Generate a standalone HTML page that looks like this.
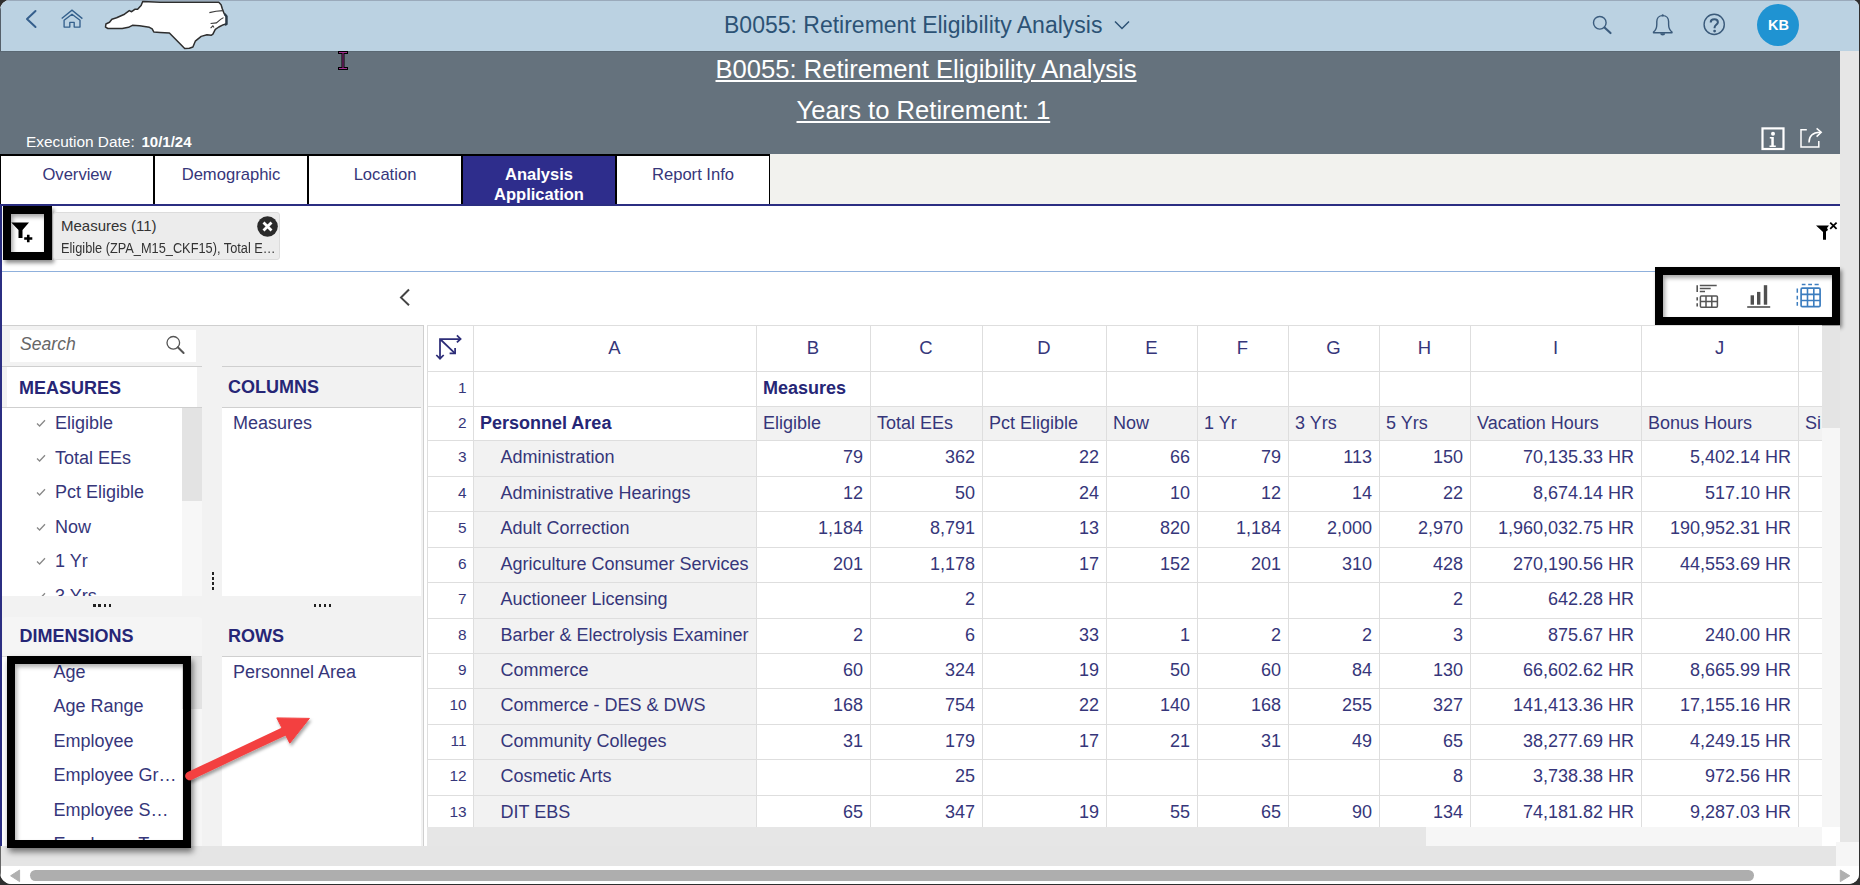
<!DOCTYPE html><html><head><meta charset="utf-8"><style>
*{box-sizing:border-box;margin:0;padding:0}
html,body{width:1860px;height:885px;overflow:hidden;background:#2f2f2f}
body{font-family:"Liberation Sans",sans-serif;position:relative}
.a{position:absolute}
.t{position:absolute;white-space:nowrap;line-height:1}
</style></head><body><div class="a" id="win" style="left:0;top:0;width:1859px;height:884px;background:#fff;border-radius:10px 7px 10px 12px;overflow:hidden">
<div class="a" style="left:0;top:0;width:1859px;height:51px;background:#bbd2e2;border-top:1px solid #9aaabb"></div>
<svg class="a" style="left:20px;top:5px" width="24" height="28" viewBox="0 0 24 28"><path d="M15.5 6 L7 14 L15.5 22" fill="none" stroke="#355f8c" stroke-width="2" stroke-linecap="round" stroke-linejoin="round"/></svg>
<svg class="a" style="left:58px;top:5px" width="28" height="28" viewBox="0 0 28 28"><path d="M3.7 13.6 L14 5.2 L24.4 13.6" fill="none" stroke="#34608c" stroke-width="1.35"/><path d="M6.1 22.1 V15.3 L14 9.2 L22 15.3 V22.1 H16.2 V17.4 H11.8 V22.1 Z" fill="none" stroke="#34608c" stroke-width="1.35" stroke-linejoin="round"/></svg>
<svg class="a" style="left:100px;top:0" width="132" height="52" viewBox="100 0 132 52"><path d="M142.7 1.4 L160 2.35 L218.8 2.35 L221.1 4.7 L222.3 8.8 L224.1 13.5 L226.2 16 L226.2 24.1 L223.5 24.7 L218.8 27 L215.3 29.4 L212.9 34.1 L211.1 35.3 L207 34.7 L201.2 36.4 L195.3 41.2 L192.9 47 L189.4 48.2 L184.7 48.6 L169.4 32.9 L160 32.4 L153.8 32 L152.2 28.9 L149.4 27.3 L139.6 25.7 L132.4 25.3 L128.5 27.3 L122.2 28.5 L107.9 28.5 L105.5 27.2 L105.9 24 L109.5 22.3 L111.9 19.2 L116.6 17.8 L124.5 14.2 L129.3 10.6 L131.6 11.7 L134.8 9.3 L137.6 9.3 L141.1 5.5 Z" fill="#fff" stroke="#2e2e2e" stroke-width="1.5" stroke-linejoin="round"/><path d="M209.4 12.6 L216 11.2 L222.9 10.6 M210.6 23.5 L216.4 22.9 L220.6 19.4 L223.5 17.6 M210.6 28.2 L212.9 25.9 L214 27.5" fill="none" stroke="#3a3a3a" stroke-width="1.1"/><path d="M224.6 14 L226.6 16.5 L226.6 24 L225 25" fill="none" stroke="#2a3a48" stroke-width="2.2"/></svg>
<div class="t" style="left:724px;top:14px;font-size:23px;color:#2c5275">B0055: Retirement Eligibility Analysis</div>
<svg class="a" style="left:1112px;top:17px" width="20" height="16" viewBox="0 0 20 16"><path d="M3 4.5 L10 11.5 L17 4.5" fill="none" stroke="#2c5275" stroke-width="1.5"/></svg>
<svg class="a" style="left:1588px;top:11px" width="28" height="28" viewBox="0 0 28 28"><circle cx="11.8" cy="11.8" r="6.3" fill="none" stroke="#3b5c7e" stroke-width="1.4"/><path d="M16.5 16.5 L22.5 22" stroke="#3b5c7e" stroke-width="2.2" stroke-linecap="round"/></svg>
<svg class="a" style="left:1645px;top:8px" width="40" height="34" viewBox="1645 8 40 34"><path d="M1662.7 15.6 C1666.7 15.6 1668.6 18.6 1668.6 21.6 V24.2 C1668.6 27.6 1669.6 30.2 1672 32 V32.7 H1653.5 V32 C1655.9 30.2 1656.8 27.6 1656.8 24.2 V21.6 C1656.8 18.6 1658.7 15.6 1662.7 15.6 Z" fill="none" stroke="#3a5a7a" stroke-width="1.4" stroke-linejoin="round"/><path d="M1660.2 33.2 A2.5 2.3 0 0 0 1665.2 33.2 Z" fill="#3a5a7a"/><circle cx="1662.7" cy="15.4" r="1.1" fill="#3a5a7a"/></svg>
<svg class="a" style="left:1698px;top:8px" width="34" height="34" viewBox="1698 8 34 34"><circle cx="1714.2" cy="24.4" r="10.1" fill="none" stroke="#3a5a7a" stroke-width="1.4"/><path d="M1710.7 22.4 C1710.7 20.3 1712.3 19.2 1714.3 19.2 C1716.4 19.2 1717.9 20.5 1717.9 22.2 C1717.9 24.6 1714.6 25 1714.6 27.3 V28.3" fill="none" stroke="#3a5a7a" stroke-width="2"/><circle cx="1714.6" cy="31.1" r="1.4" fill="#3a5a7a"/></svg>
<div class="a" style="left:1757px;top:4px;width:42px;height:42px;border-radius:50%;background:#1f93d2"></div>
<div class="t" style="left:1768px;top:18px;font-size:14.5px;font-weight:700;color:#fff">KB</div>
<div class="a" style="left:0;top:51px;width:1840px;height:103px;background:#65727d;border-top:1px solid #5a6873"></div>
<div class="a" style="left:1840px;top:51px;width:19px;height:795px;background:#e6e6e6"></div>
<div class="t" style="left:715.5px;top:57px;font-size:25.6px;color:#fff;text-decoration:underline;text-decoration-thickness:1.5px;text-underline-offset:2px">B0055: Retirement Eligibility Analysis</div>
<div class="t" style="left:796.5px;top:98px;font-size:25.6px;color:#fff;text-decoration:underline;text-decoration-thickness:1.5px;text-underline-offset:2px">Years to Retirement: 1</div>
<div class="t" style="left:26px;top:133.5px;font-size:15.4px;color:#fff">Execution Date:</div>
<div class="t" style="left:141.5px;top:133.5px;font-size:15px;font-weight:700;color:#fff">10/1/24</div>
<svg class="a" style="left:336px;top:50px" width="14" height="22" viewBox="0 0 14 22"><path d="M2 2.5 H12 M7 2.5 V18.5 M2 18.5 H12" fill="none" stroke="#000" stroke-width="3"/><path d="M3 2.5 H11 M7 3 V18 M3 18.5 H11" fill="none" stroke="#a03090" stroke-width="1"/></svg>
<svg class="a" style="left:1758px;top:124px" width="30" height="30" viewBox="0 0 30 30"><rect x="4.5" y="4.4" width="21" height="20.6" fill="none" stroke="#fff" stroke-width="2.2"/><circle cx="15" cy="9.8" r="2" fill="#fff"/><path d="M11.8 13 H15.8 V21.5 H17.8 V23 H11.5 V21.5 H13.3 V14.5 H11.8 Z" fill="#fff"/></svg>
<svg class="a" style="left:1796px;top:124px" width="30" height="30" viewBox="0 0 30 30"><path d="M10.8 5.8 H5 V23 H22.8 V17" fill="none" stroke="#fff" stroke-width="1.5"/><path d="M13 18.5 C13 12 17 8.5 24 8.3" fill="none" stroke="#fff" stroke-width="1.5"/><path d="M20.6 4.4 L25.2 8.3 L20.6 12.6" fill="none" stroke="#fff" stroke-width="1.5"/></svg>
<div class="a" style="left:0;top:154px;width:1840px;height:52px;background:#f2f2ee"></div>
<div class="a" style="left:0;top:154px;width:770px;height:51px;background:#000"></div>
<div class="a" style="left:1px;top:155.5px;width:152px;height:49.5px;background:#fff"></div>
<div class="t" style="left:1px;top:167px;width:152px;text-align:center;font-size:16.6px;color:#36367a">Overview</div>
<div class="a" style="left:155px;top:155.5px;width:152px;height:49.5px;background:#fff"></div>
<div class="t" style="left:155px;top:167px;width:152px;text-align:center;font-size:16.6px;color:#36367a">Demographic</div>
<div class="a" style="left:309px;top:155.5px;width:152px;height:49.5px;background:#fff"></div>
<div class="t" style="left:309px;top:167px;width:152px;text-align:center;font-size:16.6px;color:#36367a">Location</div>
<div class="a" style="left:463px;top:155.5px;width:152px;height:49.5px;background:#2e2d8c"></div>
<div class="t" style="left:463px;top:164px;width:152px;text-align:center;font-size:16.5px;line-height:20px;font-weight:700;color:#fff">Analysis<br>Application</div>
<div class="a" style="left:617px;top:155.5px;width:152px;height:49.5px;background:#fff"></div>
<div class="t" style="left:617px;top:167px;width:152px;text-align:center;font-size:16.6px;color:#36367a">Report Info</div>
<div class="a" style="left:0;top:204px;width:1840px;height:2px;background:#2b2e82"></div>
<div class="a" style="left:0;top:206px;width:2px;height:640px;background:#2b2e82"></div>
<div class="a" style="left:2px;top:271px;width:1838px;height:1px;background:#8fb0dc"></div>
<div class="a" style="left:2.5px;top:205.5px;width:49.5px;height:54px;background:#fff;border:8.5px solid #000;box-shadow:2px 3px 4px rgba(0,0,0,.45), inset 2px 3px 4px rgba(0,0,0,.35)"></div>
<svg class="a" style="left:10px;top:218px" width="26" height="28" viewBox="0 0 26 28"><path d="M1.3 4.6 H19 L12.5 12 V19.9 H8.5 V12 Z" fill="#000"/><path d="M14.2 20.5 H22.3 M18.25 16.7 V24.3" stroke="#000" stroke-width="2.6"/></svg>
<div class="a" style="left:53px;top:212px;width:226.5px;height:47.5px;background:#ececec;border:1px solid #dcdcdc;border-radius:3px"></div>
<div class="t" style="left:61px;top:217.5px;font-size:15px;color:#333">Measures (11)</div>
<div class="t" style="left:61px;top:240.5px;font-size:14px;color:#333;transform:scaleX(.912);transform-origin:0 0">Eligible (ZPA_M15_CKF15), Total E…</div>
<svg class="a" style="left:256px;top:215px" width="23" height="23" viewBox="0 0 23 23"><circle cx="11.5" cy="11.5" r="10.3" fill="#2a2a2a"/><path d="M7.5 7.5 L15.5 15.5 M15.5 7.5 L7.5 15.5" stroke="#fff" stroke-width="2.8"/></svg>
<svg class="a" style="left:1814px;top:220px" width="26" height="22" viewBox="0 0 26 22"><path d="M2 5.5 H15 L13 8 L14 10 L12 11.5 V19.8 H9 V12 Z" fill="#000"/><path d="M16.2 2.6 L22.6 8.8 M22.6 2.6 L16.2 8.8" stroke="#000" stroke-width="1.8"/></svg>
<svg class="a" style="left:395px;top:285px" width="20" height="24" viewBox="0 0 20 24"><path d="M14 4.5 L6 12.6 L14 20.3" fill="none" stroke="#444" stroke-width="2"/></svg>
<div class="a" style="left:1655px;top:267px;width:185px;height:58px;background:#fff;border:8.3px solid #000;box-shadow:2px 3px 4px rgba(0,0,0,.45), inset 2px 3px 4px rgba(0,0,0,.35)"></div>
<svg class="a" style="left:1690px;top:280px" width="34" height="32" viewBox="1690 280 34 32"><path d="M1697.2 285.2 V292 M1697.2 297.2 V300.6 M1697.2 303.2 V306.6" stroke="#555" stroke-width="1.6"/><path d="M1699.8 285.5 H1716.7 M1699.8 288.5 H1710.7 M1699.8 291.5 H1705" stroke="#555" stroke-width="1.4"/><rect x="1700.4" y="296" width="17" height="11.2" rx="1" fill="none" stroke="#555" stroke-width="1.5"/><path d="M1706 296 V307 M1711.8 296 V307 M1700.4 301.6 H1717.4" stroke="#555" stroke-width="1.5"/></svg>
<svg class="a" style="left:1744px;top:280px" width="30" height="32" viewBox="1744 280 30 32"><rect x="1750.6" y="295.3" width="3.4" height="9.4" fill="#505050"/><rect x="1757" y="291.9" width="3.4" height="12.8" fill="#505050"/><rect x="1763.8" y="285.2" width="3.4" height="19.5" fill="#505050"/><rect x="1747.2" y="306.2" width="23" height="1.6" fill="#505050"/></svg>
<svg class="a" style="left:1794px;top:280px" width="30" height="32" viewBox="1794 280 30 32"><path d="M1801.8 284.4 H1805.5 M1808.2 284.4 H1812 M1814.6 284.4 H1818.7" stroke="#3c7dbf" stroke-width="1.5"/><path d="M1797.3 288.5 V292.7 M1797.3 295.7 V299.5 M1797.3 302.1 V305.8" stroke="#3c7dbf" stroke-width="1.5"/><rect x="1801.1" y="288.2" width="19" height="18.5" rx="1.2" fill="none" stroke="#3c7dbf" stroke-width="1.7"/><path d="M1807.5 288.2 V306.7 M1813.8 288.2 V306.7 M1801.1 294.4 H1820.1 M1801.1 300.5 H1820.1" stroke="#3c7dbf" stroke-width="1.6"/></svg>
<div class="a" style="left:2px;top:325px;width:422px;height:521px;background:#f2f2f2;border-top:1px solid #cfcfcf"></div>
<div class="a" style="left:422.5px;top:325px;width:1.5px;height:521px;background:#cfcfcf"></div>
<div class="a" style="left:10px;top:330px;width:186px;height:32px;background:#fff"></div>
<div class="t" style="left:20px;top:336px;font-size:17.6px;font-style:italic;color:#666">Search</div>
<svg class="a" style="left:162px;top:332px" width="26" height="26" viewBox="0 0 26 26"><circle cx="11.3" cy="10.8" r="6.3" fill="none" stroke="#555" stroke-width="1.3"/><path d="M15.8 15.3 L21.6 21" stroke="#555" stroke-width="2" stroke-linecap="round"/></svg>
<div class="a" style="left:2px;top:366px;width:200px;height:1px;background:#cfcfcf"></div>
<div class="a" style="left:7px;top:367px;width:190px;height:40px;background:#fff"></div>
<div class="t" style="left:19px;top:379px;font-size:18px;font-weight:700;color:#262676">MEASURES</div>
<div class="a" style="left:2px;top:407px;width:200px;height:1px;background:#cfcfcf"></div>
<div class="a" style="left:2px;top:408px;width:180px;height:188px;background:#fff"></div>
<div class="a" style="left:182px;top:408px;width:19.5px;height:93px;background:#e3e3e3"></div>
<div class="a" style="left:182px;top:501px;width:19.5px;height:95px;background:#f7f7f7"></div>
<div class="t" style="left:55px;top:414.3px;font-size:18px;color:#36367a">Eligible</div>
<svg class="a" style="left:35px;top:418.3px" width="12" height="10" viewBox="0 0 12 10"><path d="M2 5.5 L4.6 8 L10 2.2" fill="none" stroke="#888" stroke-width="1.3"/></svg>
<div class="t" style="left:55px;top:448.8px;font-size:18px;color:#36367a">Total EEs</div>
<svg class="a" style="left:35px;top:452.8px" width="12" height="10" viewBox="0 0 12 10"><path d="M2 5.5 L4.6 8 L10 2.2" fill="none" stroke="#888" stroke-width="1.3"/></svg>
<div class="t" style="left:55px;top:483.3px;font-size:18px;color:#36367a">Pct Eligible</div>
<svg class="a" style="left:35px;top:487.3px" width="12" height="10" viewBox="0 0 12 10"><path d="M2 5.5 L4.6 8 L10 2.2" fill="none" stroke="#888" stroke-width="1.3"/></svg>
<div class="t" style="left:55px;top:517.8px;font-size:18px;color:#36367a">Now</div>
<svg class="a" style="left:35px;top:521.8px" width="12" height="10" viewBox="0 0 12 10"><path d="M2 5.5 L4.6 8 L10 2.2" fill="none" stroke="#888" stroke-width="1.3"/></svg>
<div class="t" style="left:55px;top:552.3px;font-size:18px;color:#36367a">1 Yr</div>
<svg class="a" style="left:35px;top:556.3px" width="12" height="10" viewBox="0 0 12 10"><path d="M2 5.5 L4.6 8 L10 2.2" fill="none" stroke="#888" stroke-width="1.3"/></svg>
<div class="t" style="left:55px;top:586.8px;font-size:18px;color:#36367a">3 Yrs</div>
<svg class="a" style="left:35px;top:590.8px" width="12" height="10" viewBox="0 0 12 10"><path d="M2 5.5 L4.6 8 L10 2.2" fill="none" stroke="#888" stroke-width="1.3"/></svg>
<div class="a" style="left:2px;top:596px;width:200px;height:20px;background:#f2f2f2"></div>
<div class="a" style="left:93.3px;top:604.2px;width:2.6px;height:2.8px;background:#222"></div><div class="a" style="left:98.4px;top:604.2px;width:2.6px;height:2.8px;background:#222"></div><div class="a" style="left:103.5px;top:604.2px;width:2.6px;height:2.8px;background:#222"></div><div class="a" style="left:108.6px;top:604.2px;width:2.6px;height:2.8px;background:#222"></div>
<div class="a" style="left:313.5px;top:604.2px;width:2.6px;height:2.8px;background:#222"></div><div class="a" style="left:318.6px;top:604.2px;width:2.6px;height:2.8px;background:#222"></div><div class="a" style="left:323.7px;top:604.2px;width:2.6px;height:2.8px;background:#222"></div><div class="a" style="left:328.8px;top:604.2px;width:2.6px;height:2.8px;background:#222"></div>
<div class="a" style="left:211.5px;top:572.0px;width:2.6px;height:2.6px;background:#222"></div>
<div class="a" style="left:211.5px;top:577.0px;width:2.6px;height:2.6px;background:#222"></div>
<div class="a" style="left:211.5px;top:582.0px;width:2.6px;height:2.6px;background:#222"></div>
<div class="a" style="left:211.5px;top:587.0px;width:2.6px;height:2.6px;background:#222"></div>
<div class="a" style="left:3px;top:616.5px;width:199px;height:40px;background:#f5f5f5;border-radius:3px 3px 0 0"></div>
<div class="t" style="left:19.5px;top:627px;font-size:18px;font-weight:700;color:#262676">DIMENSIONS</div>
<div class="a" style="left:2px;top:656px;width:200px;height:1px;background:#dcdcdc"></div>
<div class="a" style="left:2px;top:657px;width:180px;height:189px;background:#fff"></div>
<div class="a" style="left:182px;top:657px;width:19.5px;height:52px;background:#e3e3e3"></div>
<div class="a" style="left:182px;top:709px;width:19.5px;height:137px;background:#f7f7f7"></div>
<div class="t" style="left:53.5px;top:662.6px;font-size:18px;color:#36367a">Age</div>
<div class="t" style="left:53.5px;top:697.1px;font-size:18px;color:#36367a">Age Range</div>
<div class="t" style="left:53.5px;top:731.6px;font-size:18px;color:#36367a">Employee</div>
<div class="t" style="left:53.5px;top:766.1px;font-size:18px;color:#36367a">Employee Gr…</div>
<div class="t" style="left:53.5px;top:800.6px;font-size:18px;color:#36367a">Employee S…</div>
<div class="t" style="left:53.5px;top:835.1px;font-size:18px;color:#36367a">Employee Ty</div>
<div class="a" style="left:222px;top:366px;width:199px;height:1px;background:#cfcfcf"></div>
<div class="a" style="left:222px;top:367.5px;width:199px;height:40px;background:#f2f2f2"></div>
<div class="t" style="left:228px;top:378px;font-size:18px;font-weight:700;color:#262676">COLUMNS</div>
<div class="a" style="left:222px;top:407px;width:199px;height:1px;background:#cfcfcf"></div>
<div class="a" style="left:222px;top:408px;width:199px;height:188px;background:#fff"></div>
<div class="t" style="left:233px;top:413.7px;font-size:18px;color:#36367a">Measures</div>
<div class="a" style="left:222px;top:616.5px;width:199px;height:40px;background:#f2f2f2"></div>
<div class="t" style="left:228px;top:627px;font-size:18px;font-weight:700;color:#262676">ROWS</div>
<div class="a" style="left:222px;top:656px;width:199px;height:1px;background:#cfcfcf"></div>
<div class="a" style="left:222px;top:657px;width:199px;height:189px;background:#fff"></div>
<div class="t" style="left:233px;top:663px;font-size:18px;color:#36367a">Personnel Area</div>
<div class="a" style="left:427px;top:325px;width:1395px;height:502px;background:#fff;overflow:hidden" id="tbl">
<div class="a" style="left:329.0px;top:81.0px;width:1144.0px;height:34px;background:#f2f2f2"></div>
<div class="a" style="left:46.0px;top:115.0px;width:283.0px;height:400px;background:#f2f2f2"></div>
<div class="a" style="left:0px;top:0;width:1px;height:510px;background:#dedede"></div>
<div class="a" style="left:46px;top:0;width:1px;height:510px;background:#dedede"></div>
<div class="a" style="left:329px;top:0;width:1px;height:510px;background:#dedede"></div>
<div class="a" style="left:443px;top:0;width:1px;height:510px;background:#dedede"></div>
<div class="a" style="left:555px;top:0;width:1px;height:510px;background:#dedede"></div>
<div class="a" style="left:679px;top:0;width:1px;height:510px;background:#dedede"></div>
<div class="a" style="left:770px;top:0;width:1px;height:510px;background:#dedede"></div>
<div class="a" style="left:861px;top:0;width:1px;height:510px;background:#dedede"></div>
<div class="a" style="left:952px;top:0;width:1px;height:510px;background:#dedede"></div>
<div class="a" style="left:1043px;top:0;width:1px;height:510px;background:#dedede"></div>
<div class="a" style="left:1214px;top:0;width:1px;height:510px;background:#dedede"></div>
<div class="a" style="left:1371px;top:0;width:1px;height:510px;background:#dedede"></div>
<div class="a" style="left:0;top:0;width:1400px;height:1px;background:#dedede"></div>
<div class="a" style="left:0;top:46px;width:1400px;height:1px;background:#dedede"></div>
<div class="a" style="left:0;top:81px;width:1400px;height:1px;background:#dedede"></div>
<div class="a" style="left:0;top:115px;width:1400px;height:1px;background:#dedede"></div>
<div class="a" style="left:0;top:151px;width:1400px;height:1px;background:#dedede"></div>
<div class="a" style="left:0;top:186px;width:1400px;height:1px;background:#dedede"></div>
<div class="a" style="left:0;top:222px;width:1400px;height:1px;background:#dedede"></div>
<div class="a" style="left:0;top:257px;width:1400px;height:1px;background:#dedede"></div>
<div class="a" style="left:0;top:293px;width:1400px;height:1px;background:#dedede"></div>
<div class="a" style="left:0;top:328px;width:1400px;height:1px;background:#dedede"></div>
<div class="a" style="left:0;top:363px;width:1400px;height:1px;background:#dedede"></div>
<div class="a" style="left:0;top:399px;width:1400px;height:1px;background:#dedede"></div>
<div class="a" style="left:0;top:434px;width:1400px;height:1px;background:#dedede"></div>
<div class="a" style="left:0;top:470px;width:1400px;height:1px;background:#dedede"></div>
<div class="a" style="left:0;top:505px;width:1400px;height:1px;background:#dedede"></div>
<div class="t" style="left:46.0px;width:283.0px;top:14.0px;text-align:center;font-size:18.5px;color:#36367a">A</div>
<div class="t" style="left:329.0px;width:114.0px;top:14.0px;text-align:center;font-size:18.5px;color:#36367a">B</div>
<div class="t" style="left:443.0px;width:112.0px;top:14.0px;text-align:center;font-size:18.5px;color:#36367a">C</div>
<div class="t" style="left:555.0px;width:124.0px;top:14.0px;text-align:center;font-size:18.5px;color:#36367a">D</div>
<div class="t" style="left:679.0px;width:91.0px;top:14.0px;text-align:center;font-size:18.5px;color:#36367a">E</div>
<div class="t" style="left:770.0px;width:91.0px;top:14.0px;text-align:center;font-size:18.5px;color:#36367a">F</div>
<div class="t" style="left:861.0px;width:91.0px;top:14.0px;text-align:center;font-size:18.5px;color:#36367a">G</div>
<div class="t" style="left:952.0px;width:91.0px;top:14.0px;text-align:center;font-size:18.5px;color:#36367a">H</div>
<div class="t" style="left:1043.0px;width:171.0px;top:14.0px;text-align:center;font-size:18.5px;color:#36367a">I</div>
<div class="t" style="left:1214.0px;width:157.0px;top:14.0px;text-align:center;font-size:18.5px;color:#36367a">J</div>
<svg class="a" style="left:5.0px;top:7.0px" width="34" height="32" viewBox="432 332 34 32"><path d="M440 358.5 V339 H460.5 M440 339 L455 353.3" fill="none" stroke="#2d2d78" stroke-width="1.75"/><path d="M456.9 335.4 L460.6 338.9 L456.9 342.4 M436.3 355 L440 358.7 L443.7 355 M455.1 348 V353.3 H449.6" fill="none" stroke="#2d2d78" stroke-width="1.75" stroke-linejoin="miter"/></svg>
<div class="t" style="left:0.0px;width:39.5px;top:55.0px;text-align:right;font-size:15.4px;color:#36367a">1</div>
<div class="t" style="left:336.0px;top:54.0px;font-size:18px;font-weight:700;color:#262676">Measures</div>
<div class="t" style="left:0.0px;width:39.5px;top:90.0px;text-align:right;font-size:15.4px;color:#36367a">2</div>
<div class="t" style="left:53.0px;top:89.0px;font-size:18px;font-weight:700;color:#262676">Personnel Area</div>
<div class="t" style="left:336.0px;top:89.0px;font-size:18px;color:#36367a">Eligible</div>
<div class="t" style="left:450.0px;top:89.0px;font-size:18px;color:#36367a">Total EEs</div>
<div class="t" style="left:562.0px;top:89.0px;font-size:18px;color:#36367a">Pct Eligible</div>
<div class="t" style="left:686.0px;top:89.0px;font-size:18px;color:#36367a">Now</div>
<div class="t" style="left:777.0px;top:89.0px;font-size:18px;color:#36367a">1 Yr</div>
<div class="t" style="left:868.0px;top:89.0px;font-size:18px;color:#36367a">3 Yrs</div>
<div class="t" style="left:959.0px;top:89.0px;font-size:18px;color:#36367a">5 Yrs</div>
<div class="t" style="left:1050.0px;top:89.0px;font-size:18px;color:#36367a">Vacation Hours</div>
<div class="t" style="left:1221.0px;top:89.0px;font-size:18px;color:#36367a">Bonus Hours</div>
<div class="t" style="left:1378.0px;top:89.0px;font-size:18px;color:#36367a">Si</div>
<div class="t" style="left:0.0px;width:39.5px;top:124.0px;text-align:right;font-size:15.4px;color:#36367a">3</div>
<div class="t" style="left:73.5px;top:123.0px;font-size:18px;color:#36367a">Administration</div>
<div class="t" style="left:329.0px;width:107.0px;top:123.0px;text-align:right;font-size:18px;color:#36367a">79</div>
<div class="t" style="left:443.0px;width:105.0px;top:123.0px;text-align:right;font-size:18px;color:#36367a">362</div>
<div class="t" style="left:555.0px;width:117.0px;top:123.0px;text-align:right;font-size:18px;color:#36367a">22</div>
<div class="t" style="left:679.0px;width:84.0px;top:123.0px;text-align:right;font-size:18px;color:#36367a">66</div>
<div class="t" style="left:770.0px;width:84.0px;top:123.0px;text-align:right;font-size:18px;color:#36367a">79</div>
<div class="t" style="left:861.0px;width:84.0px;top:123.0px;text-align:right;font-size:18px;color:#36367a">113</div>
<div class="t" style="left:952.0px;width:84.0px;top:123.0px;text-align:right;font-size:18px;color:#36367a">150</div>
<div class="t" style="left:1043.0px;width:164.0px;top:123.0px;text-align:right;font-size:18px;color:#36367a">70,135.33 HR</div>
<div class="t" style="left:1214.0px;width:150.0px;top:123.0px;text-align:right;font-size:18px;color:#36367a">5,402.14 HR</div>
<div class="t" style="left:0.0px;width:39.5px;top:160.0px;text-align:right;font-size:15.4px;color:#36367a">4</div>
<div class="t" style="left:73.5px;top:159.0px;font-size:18px;color:#36367a">Administrative Hearings</div>
<div class="t" style="left:329.0px;width:107.0px;top:159.0px;text-align:right;font-size:18px;color:#36367a">12</div>
<div class="t" style="left:443.0px;width:105.0px;top:159.0px;text-align:right;font-size:18px;color:#36367a">50</div>
<div class="t" style="left:555.0px;width:117.0px;top:159.0px;text-align:right;font-size:18px;color:#36367a">24</div>
<div class="t" style="left:679.0px;width:84.0px;top:159.0px;text-align:right;font-size:18px;color:#36367a">10</div>
<div class="t" style="left:770.0px;width:84.0px;top:159.0px;text-align:right;font-size:18px;color:#36367a">12</div>
<div class="t" style="left:861.0px;width:84.0px;top:159.0px;text-align:right;font-size:18px;color:#36367a">14</div>
<div class="t" style="left:952.0px;width:84.0px;top:159.0px;text-align:right;font-size:18px;color:#36367a">22</div>
<div class="t" style="left:1043.0px;width:164.0px;top:159.0px;text-align:right;font-size:18px;color:#36367a">8,674.14 HR</div>
<div class="t" style="left:1214.0px;width:150.0px;top:159.0px;text-align:right;font-size:18px;color:#36367a">517.10 HR</div>
<div class="t" style="left:0.0px;width:39.5px;top:195.0px;text-align:right;font-size:15.4px;color:#36367a">5</div>
<div class="t" style="left:73.5px;top:194.0px;font-size:18px;color:#36367a">Adult Correction</div>
<div class="t" style="left:329.0px;width:107.0px;top:194.0px;text-align:right;font-size:18px;color:#36367a">1,184</div>
<div class="t" style="left:443.0px;width:105.0px;top:194.0px;text-align:right;font-size:18px;color:#36367a">8,791</div>
<div class="t" style="left:555.0px;width:117.0px;top:194.0px;text-align:right;font-size:18px;color:#36367a">13</div>
<div class="t" style="left:679.0px;width:84.0px;top:194.0px;text-align:right;font-size:18px;color:#36367a">820</div>
<div class="t" style="left:770.0px;width:84.0px;top:194.0px;text-align:right;font-size:18px;color:#36367a">1,184</div>
<div class="t" style="left:861.0px;width:84.0px;top:194.0px;text-align:right;font-size:18px;color:#36367a">2,000</div>
<div class="t" style="left:952.0px;width:84.0px;top:194.0px;text-align:right;font-size:18px;color:#36367a">2,970</div>
<div class="t" style="left:1043.0px;width:164.0px;top:194.0px;text-align:right;font-size:18px;color:#36367a">1,960,032.75 HR</div>
<div class="t" style="left:1214.0px;width:150.0px;top:194.0px;text-align:right;font-size:18px;color:#36367a">190,952.31 HR</div>
<div class="t" style="left:0.0px;width:39.5px;top:231.0px;text-align:right;font-size:15.4px;color:#36367a">6</div>
<div class="t" style="left:73.5px;top:230.0px;font-size:18px;color:#36367a">Agriculture Consumer Services</div>
<div class="t" style="left:329.0px;width:107.0px;top:230.0px;text-align:right;font-size:18px;color:#36367a">201</div>
<div class="t" style="left:443.0px;width:105.0px;top:230.0px;text-align:right;font-size:18px;color:#36367a">1,178</div>
<div class="t" style="left:555.0px;width:117.0px;top:230.0px;text-align:right;font-size:18px;color:#36367a">17</div>
<div class="t" style="left:679.0px;width:84.0px;top:230.0px;text-align:right;font-size:18px;color:#36367a">152</div>
<div class="t" style="left:770.0px;width:84.0px;top:230.0px;text-align:right;font-size:18px;color:#36367a">201</div>
<div class="t" style="left:861.0px;width:84.0px;top:230.0px;text-align:right;font-size:18px;color:#36367a">310</div>
<div class="t" style="left:952.0px;width:84.0px;top:230.0px;text-align:right;font-size:18px;color:#36367a">428</div>
<div class="t" style="left:1043.0px;width:164.0px;top:230.0px;text-align:right;font-size:18px;color:#36367a">270,190.56 HR</div>
<div class="t" style="left:1214.0px;width:150.0px;top:230.0px;text-align:right;font-size:18px;color:#36367a">44,553.69 HR</div>
<div class="t" style="left:0.0px;width:39.5px;top:266.0px;text-align:right;font-size:15.4px;color:#36367a">7</div>
<div class="t" style="left:73.5px;top:265.0px;font-size:18px;color:#36367a">Auctioneer Licensing</div>
<div class="t" style="left:443.0px;width:105.0px;top:265.0px;text-align:right;font-size:18px;color:#36367a">2</div>
<div class="t" style="left:952.0px;width:84.0px;top:265.0px;text-align:right;font-size:18px;color:#36367a">2</div>
<div class="t" style="left:1043.0px;width:164.0px;top:265.0px;text-align:right;font-size:18px;color:#36367a">642.28 HR</div>
<div class="t" style="left:0.0px;width:39.5px;top:302.0px;text-align:right;font-size:15.4px;color:#36367a">8</div>
<div class="t" style="left:73.5px;top:301.0px;font-size:18px;color:#36367a">Barber &amp; Electrolysis Examiner</div>
<div class="t" style="left:329.0px;width:107.0px;top:301.0px;text-align:right;font-size:18px;color:#36367a">2</div>
<div class="t" style="left:443.0px;width:105.0px;top:301.0px;text-align:right;font-size:18px;color:#36367a">6</div>
<div class="t" style="left:555.0px;width:117.0px;top:301.0px;text-align:right;font-size:18px;color:#36367a">33</div>
<div class="t" style="left:679.0px;width:84.0px;top:301.0px;text-align:right;font-size:18px;color:#36367a">1</div>
<div class="t" style="left:770.0px;width:84.0px;top:301.0px;text-align:right;font-size:18px;color:#36367a">2</div>
<div class="t" style="left:861.0px;width:84.0px;top:301.0px;text-align:right;font-size:18px;color:#36367a">2</div>
<div class="t" style="left:952.0px;width:84.0px;top:301.0px;text-align:right;font-size:18px;color:#36367a">3</div>
<div class="t" style="left:1043.0px;width:164.0px;top:301.0px;text-align:right;font-size:18px;color:#36367a">875.67 HR</div>
<div class="t" style="left:1214.0px;width:150.0px;top:301.0px;text-align:right;font-size:18px;color:#36367a">240.00 HR</div>
<div class="t" style="left:0.0px;width:39.5px;top:337.0px;text-align:right;font-size:15.4px;color:#36367a">9</div>
<div class="t" style="left:73.5px;top:336.0px;font-size:18px;color:#36367a">Commerce</div>
<div class="t" style="left:329.0px;width:107.0px;top:336.0px;text-align:right;font-size:18px;color:#36367a">60</div>
<div class="t" style="left:443.0px;width:105.0px;top:336.0px;text-align:right;font-size:18px;color:#36367a">324</div>
<div class="t" style="left:555.0px;width:117.0px;top:336.0px;text-align:right;font-size:18px;color:#36367a">19</div>
<div class="t" style="left:679.0px;width:84.0px;top:336.0px;text-align:right;font-size:18px;color:#36367a">50</div>
<div class="t" style="left:770.0px;width:84.0px;top:336.0px;text-align:right;font-size:18px;color:#36367a">60</div>
<div class="t" style="left:861.0px;width:84.0px;top:336.0px;text-align:right;font-size:18px;color:#36367a">84</div>
<div class="t" style="left:952.0px;width:84.0px;top:336.0px;text-align:right;font-size:18px;color:#36367a">130</div>
<div class="t" style="left:1043.0px;width:164.0px;top:336.0px;text-align:right;font-size:18px;color:#36367a">66,602.62 HR</div>
<div class="t" style="left:1214.0px;width:150.0px;top:336.0px;text-align:right;font-size:18px;color:#36367a">8,665.99 HR</div>
<div class="t" style="left:0.0px;width:39.5px;top:372.0px;text-align:right;font-size:15.4px;color:#36367a">10</div>
<div class="t" style="left:73.5px;top:371.0px;font-size:18px;color:#36367a">Commerce - DES &amp; DWS</div>
<div class="t" style="left:329.0px;width:107.0px;top:371.0px;text-align:right;font-size:18px;color:#36367a">168</div>
<div class="t" style="left:443.0px;width:105.0px;top:371.0px;text-align:right;font-size:18px;color:#36367a">754</div>
<div class="t" style="left:555.0px;width:117.0px;top:371.0px;text-align:right;font-size:18px;color:#36367a">22</div>
<div class="t" style="left:679.0px;width:84.0px;top:371.0px;text-align:right;font-size:18px;color:#36367a">140</div>
<div class="t" style="left:770.0px;width:84.0px;top:371.0px;text-align:right;font-size:18px;color:#36367a">168</div>
<div class="t" style="left:861.0px;width:84.0px;top:371.0px;text-align:right;font-size:18px;color:#36367a">255</div>
<div class="t" style="left:952.0px;width:84.0px;top:371.0px;text-align:right;font-size:18px;color:#36367a">327</div>
<div class="t" style="left:1043.0px;width:164.0px;top:371.0px;text-align:right;font-size:18px;color:#36367a">141,413.36 HR</div>
<div class="t" style="left:1214.0px;width:150.0px;top:371.0px;text-align:right;font-size:18px;color:#36367a">17,155.16 HR</div>
<div class="t" style="left:0.0px;width:39.5px;top:408.0px;text-align:right;font-size:15.4px;color:#36367a">11</div>
<div class="t" style="left:73.5px;top:407.0px;font-size:18px;color:#36367a">Community Colleges</div>
<div class="t" style="left:329.0px;width:107.0px;top:407.0px;text-align:right;font-size:18px;color:#36367a">31</div>
<div class="t" style="left:443.0px;width:105.0px;top:407.0px;text-align:right;font-size:18px;color:#36367a">179</div>
<div class="t" style="left:555.0px;width:117.0px;top:407.0px;text-align:right;font-size:18px;color:#36367a">17</div>
<div class="t" style="left:679.0px;width:84.0px;top:407.0px;text-align:right;font-size:18px;color:#36367a">21</div>
<div class="t" style="left:770.0px;width:84.0px;top:407.0px;text-align:right;font-size:18px;color:#36367a">31</div>
<div class="t" style="left:861.0px;width:84.0px;top:407.0px;text-align:right;font-size:18px;color:#36367a">49</div>
<div class="t" style="left:952.0px;width:84.0px;top:407.0px;text-align:right;font-size:18px;color:#36367a">65</div>
<div class="t" style="left:1043.0px;width:164.0px;top:407.0px;text-align:right;font-size:18px;color:#36367a">38,277.69 HR</div>
<div class="t" style="left:1214.0px;width:150.0px;top:407.0px;text-align:right;font-size:18px;color:#36367a">4,249.15 HR</div>
<div class="t" style="left:0.0px;width:39.5px;top:443.0px;text-align:right;font-size:15.4px;color:#36367a">12</div>
<div class="t" style="left:73.5px;top:442.0px;font-size:18px;color:#36367a">Cosmetic Arts</div>
<div class="t" style="left:443.0px;width:105.0px;top:442.0px;text-align:right;font-size:18px;color:#36367a">25</div>
<div class="t" style="left:952.0px;width:84.0px;top:442.0px;text-align:right;font-size:18px;color:#36367a">8</div>
<div class="t" style="left:1043.0px;width:164.0px;top:442.0px;text-align:right;font-size:18px;color:#36367a">3,738.38 HR</div>
<div class="t" style="left:1214.0px;width:150.0px;top:442.0px;text-align:right;font-size:18px;color:#36367a">972.56 HR</div>
<div class="t" style="left:0.0px;width:39.5px;top:479.0px;text-align:right;font-size:15.4px;color:#36367a">13</div>
<div class="t" style="left:73.5px;top:478.0px;font-size:18px;color:#36367a">DIT EBS</div>
<div class="t" style="left:329.0px;width:107.0px;top:478.0px;text-align:right;font-size:18px;color:#36367a">65</div>
<div class="t" style="left:443.0px;width:105.0px;top:478.0px;text-align:right;font-size:18px;color:#36367a">347</div>
<div class="t" style="left:555.0px;width:117.0px;top:478.0px;text-align:right;font-size:18px;color:#36367a">19</div>
<div class="t" style="left:679.0px;width:84.0px;top:478.0px;text-align:right;font-size:18px;color:#36367a">55</div>
<div class="t" style="left:770.0px;width:84.0px;top:478.0px;text-align:right;font-size:18px;color:#36367a">65</div>
<div class="t" style="left:861.0px;width:84.0px;top:478.0px;text-align:right;font-size:18px;color:#36367a">90</div>
<div class="t" style="left:952.0px;width:84.0px;top:478.0px;text-align:right;font-size:18px;color:#36367a">134</div>
<div class="t" style="left:1043.0px;width:164.0px;top:478.0px;text-align:right;font-size:18px;color:#36367a">74,181.82 HR</div>
<div class="t" style="left:1214.0px;width:150.0px;top:478.0px;text-align:right;font-size:18px;color:#36367a">9,287.03 HR</div>
</div>
<div class="a" style="left:1822px;top:325.5px;width:18px;height:102px;background:#e4e4e4"></div>
<div class="a" style="left:1822px;top:427.5px;width:18px;height:399px;background:#f6f6f6"></div>
<div class="a" style="left:427px;top:827px;width:1395px;height:19px;background:#e6e6e6"></div>
<div class="a" style="left:1426px;top:827px;width:396px;height:19px;background:#f6f6f6"></div>
<div class="a" style="left:1822px;top:827px;width:18px;height:19px;background:#fff"></div>
<div class="a" style="left:0;top:846px;width:1836px;height:20px;background:#e5e5e5"></div>
<div class="a" style="left:1836px;top:842px;width:23px;height:24px;background:#f6f6f6"></div>
<div class="a" style="left:0;top:866px;width:1859px;height:18px;background:#fff"></div>
<div class="a" style="left:30.3px;top:870px;width:1724px;height:10.7px;border-radius:5.4px;background:#aeaeae"></div>
<svg class="a" style="left:8px;top:868px" width="14" height="16" viewBox="0 0 14 16"><path d="M11.6 2 V13.6 L2.6 7.8 Z" fill="#b0b0b0" stroke="#b0b0b0" stroke-width="1" stroke-linejoin="round"/></svg>
<svg class="a" style="left:1838px;top:868px" width="14" height="16" viewBox="0 0 14 16"><path d="M2.3 2 V13.6 L11.8 7.8 Z" fill="#b0b0b0" stroke="#b0b0b0" stroke-width="1" stroke-linejoin="round"/></svg>
<div class="a" style="left:7px;top:656px;width:184px;height:192px;border:8.4px solid #000;box-shadow:2px 4px 6px rgba(0,0,0,.5), inset 2px 3px 4px rgba(0,0,0,.3)"></div>
<div class="a" style="left:0;top:846px;width:1px;height:40px;background:#666"></div>
<div class="a" style="left:0;top:8px;width:1px;height:43px;background:#55606a"></div>
<svg class="a" style="left:180px;top:705px" width="140" height="85" viewBox="180 705 140 85"><defs><filter id="sh" x="-20%" y="-20%" width="140%" height="140%"><feDropShadow dx="1.5" dy="2.5" stdDeviation="1.8" flood-color="#000" flood-opacity=".35"/></filter></defs><g filter="url(#sh)"><path d="M189.5 776 L285 731" stroke="#f34141" stroke-width="8.6" stroke-linecap="round"/><path d="M276.8 717.9 L309.4 718.4 L289.8 743.2 Z" fill="#f34141" stroke="#f34141" stroke-width="1" stroke-linejoin="round"/></g></svg>
</div></body></html>
